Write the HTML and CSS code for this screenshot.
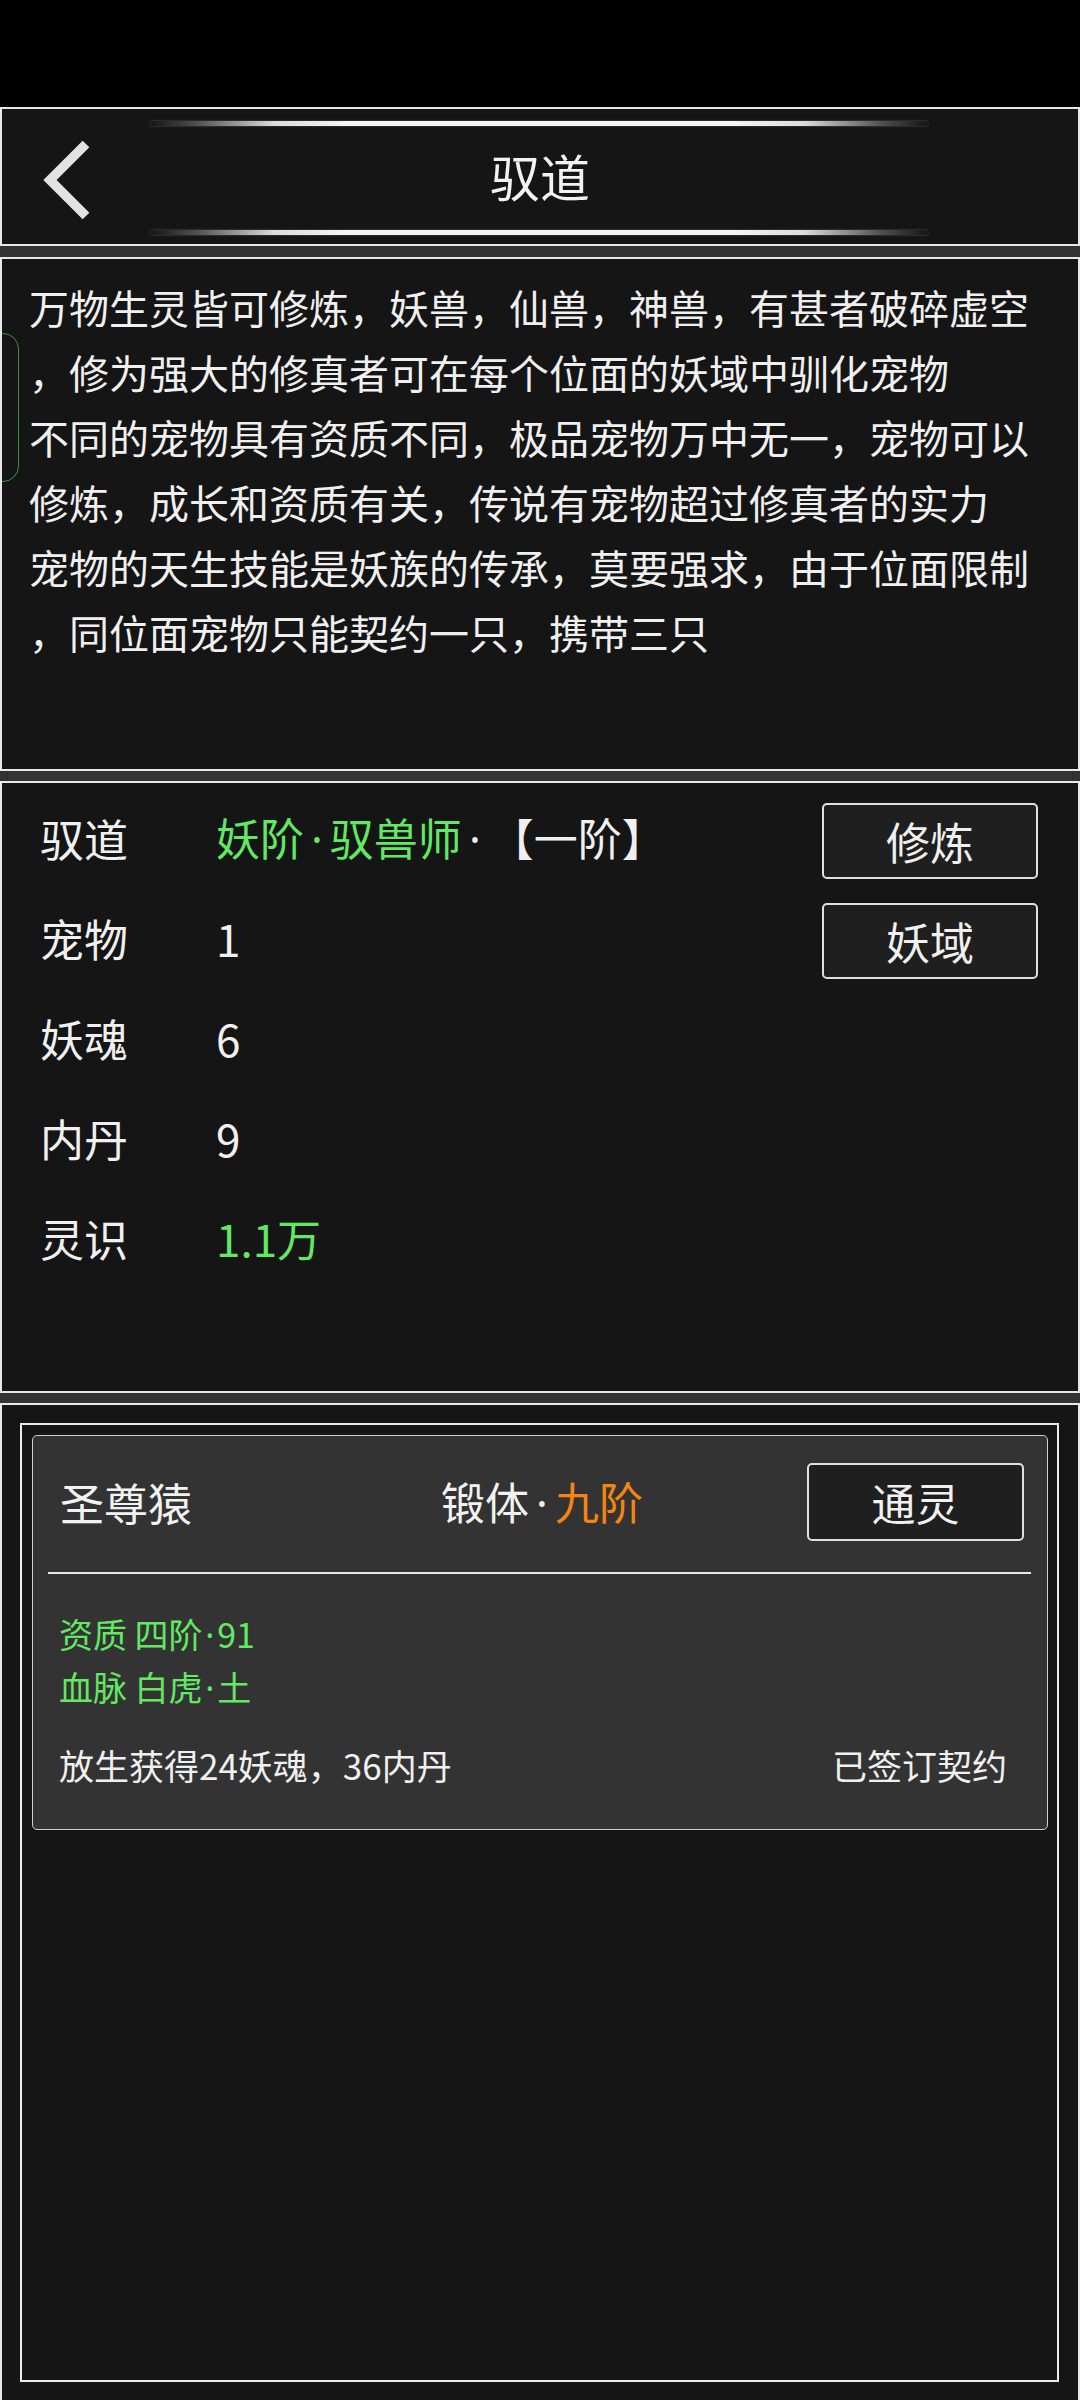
FILE: index.html
```html
<!DOCTYPE html>
<html lang="zh-CN">
<head>
<meta charset="utf-8">
<title>驭道</title>
<link rel="stylesheet" href="styles.css">
</head>
<body>
<div class="screen">
  <div class="statusbar"></div>

  <header class="panel header">
    <div class="glow"></div>
    <div class="title-row">
      <button class="back" aria-label="返回">
        <svg width="60" height="80" viewBox="0 0 60 80">
          <path d="M48 4 L12 40 L48 76" fill="none" stroke="#e2e2e2" stroke-width="9.5" stroke-linecap="butt" stroke-linejoin="miter"/>
        </svg>
      </button>
      <h1 class="title">驭道</h1>
      <span class="spacer"></span>
    </div>
    <div class="glow"></div>
  </header>

  <section class="panel intro">
    <div class="side-tab"></div>
    <p class="line">万物生灵皆可修炼，妖兽，仙兽，神兽，有甚者破碎虚空</p>
    <p class="line">，修为强大的修真者可在每个位面的妖域中驯化宠物</p>
    <p class="line">不同的宠物具有资质不同，极品宠物万中无一，宠物可以</p>
    <p class="line">修炼，成长和资质有关，传说有宠物超过修真者的实力</p>
    <p class="line">宠物的天生技能是妖族的传承，莫要强求，由于位面限制</p>
    <p class="line">，同位面宠物只能契约一只，携带三只</p>
  </section>

  <section class="panel stats">
    <div class="rows">
      <div class="row"><span class="label">驭道</span><span class="value"><span class="green">妖阶<span class="dot">·</span>驭兽师</span><span class="dot">·</span><span class="bracket">【一阶】</span></span></div>
      <div class="row"><span class="label">宠物</span><span class="value">1</span></div>
      <div class="row"><span class="label">妖魂</span><span class="value">6</span></div>
      <div class="row"><span class="label">内丹</span><span class="value">9</span></div>
      <div class="row"><span class="label">灵识</span><span class="value green">1.1万</span></div>
    </div>
    <div class="actions">
      <button class="btn">修炼</button>
      <button class="btn">妖域</button>
    </div>
  </section>

  <section class="panel pets">
    <div class="frame">
      <article class="card">
        <div class="card-head">
          <span class="pet-name">圣尊猿</span>
          <span class="pet-stage">锻体<span class="dot">·</span><span class="orange">九阶</span></span>
          <button class="btn btn-card">通灵</button>
        </div>
        <div class="divider"></div>
        <div class="card-body">
          <p class="attr green">资质 四阶<span class="dot dot-sm">·</span>91</p>
          <p class="attr green">血脉 白虎<span class="dot dot-sm">·</span>土</p>
          <div class="card-foot">
            <span>放生获得24妖魂，36内丹</span>
            <span>已签订契约</span>
          </div>
        </div>
      </article>
    </div>
  </section>
</div>
</body>
</html>
```
FILE: styles.css
```css
* { box-sizing: border-box; }

html, body {
  margin: 0;
  padding: 0;
  background: #333333;
  overflow: hidden;
}

body {
  width: 1080px;
  height: 2400px;
  font-family: "Noto Sans CJK SC", "Noto Sans", sans-serif;
  color: #f0f0f0;
  text-spacing-trim: space-all;
}

.screen {
  display: flex;
  flex-direction: column;
  gap: 10px;
}

.statusbar {
  height: 107px;
  background: #000;
  margin-bottom: -10px;
}

.panel {
  border: 2px solid #e8e8e8;
  background: #151515;
  position: relative;
}

/* header */
.header {
  height: 139px;
  margin-bottom: 1px;
  padding-top: 12px;
  display: flex;
  flex-direction: column;
}

.glow {
  width: 778px;
  height: 5px;
  margin: 0 auto 0 148px;
  border-radius: 3px;
  background: linear-gradient(90deg,
    rgba(255,255,255,0) 0%,
    rgba(255,255,255,0.25) 6%,
    rgba(255,255,255,0.85) 16%,
    #f4f4f4 25%,
    #f4f4f4 75%,
    rgba(255,255,255,0.85) 84%,
    rgba(255,255,255,0.25) 94%,
    rgba(255,255,255,0) 100%);
  box-shadow: 0 0 2px rgba(255,255,255,0.35);
}

.title-row {
  height: 104px;
  display: grid;
  grid-template-columns: 1fr auto 1fr;
  align-items: center;
}

.back {
  justify-self: start;
  margin-left: 36px;
  margin-top: 4px;
  width: 60px;
  height: 80px;
  padding: 0;
  border: 0;
  background: transparent;
  display: block;
}

.back svg { display: block; }

.title {
  margin: -6px 0 0 0;
  font-size: 50px;
  font-weight: 400;
  color: #f2f2f2;
  line-height: 1;
}

/* intro */
.intro {
  height: 514px;
  padding: 16px 0 0 27px;
  overflow: hidden;
}

.line {
  margin: 0;
  font-size: 40px;
  line-height: 65px;
  white-space: nowrap;
  color: #f0f0f0;
}

.side-tab {
  position: absolute;
  left: -20px;
  top: 74px;
  width: 37px;
  height: 149px;
  border: 1.5px solid #3a963a;
  border-radius: 16px;
}

/* stats */
.stats {
  height: 612px;
  display: flex;
  padding: 5px 40px 0 38px;
}

.rows {
  flex: 1;
  display: flex;
  flex-direction: column;
}

.row {
  height: 100px;
  display: flex;
  align-items: center;
  font-size: 44px;
  line-height: 1;
}

.label {
  width: 176px;
  color: #f0f0f0;
}

.value {
  color: #f0f0f0;
  white-space: nowrap;
}

.bracket {
  text-spacing-trim: space-all;
  font-feature-settings: "halt" 0;
  padding-left: 2px;
}

.dot {
  font-family: "Noto Sans", "DejaVu Sans", sans-serif;
  padding: 0 0.16em;
}

.dot-sm {
  padding: 0 0.08em;
}

.green { color: #62e862; }
.orange { color: #f38512; }

.actions {
  display: flex;
  flex-direction: column;
  gap: 24px;
  padding-top: 15px;
}

.btn {
  width: 216px;
  height: 76px;
  border: 2.5px solid #e0e0e0;
  border-radius: 5px;
  background: #1f1f1f;
  color: #f0f0f0;
  font-family: "Noto Sans CJK SC", "Noto Sans", sans-serif;
  font-size: 44px;
  line-height: 1;
  padding: 0;
  display: flex;
  align-items: center;
  justify-content: center;
}

/* pets */
.pets {
  height: 1000px;
  padding: 18px 19px 0 18px;
}

.frame {
  height: 959px;
  border: 2px solid #ececec;
  padding: 10px 9px 0 10px;
}

.card {
  background: #333333;
  border: 1.5px solid #cfcfcf;
  border-radius: 5px;
  height: 395px;
}

.card-head {
  display: grid;
  grid-template-columns: 1fr auto 1fr;
  align-items: center;
  padding: 27px 23px 31px 27px;
}

.pet-name {
  font-size: 44px;
  line-height: 1;
  color: #f2f2f2;
  justify-self: start;
}

.pet-stage {
  font-size: 44px;
  line-height: 1;
  color: #f2f2f2;
  white-space: nowrap;
}

.btn-card {
  justify-self: end;
  width: 217px;
  height: 78px;
}

.divider {
  height: 2px;
  background: #e8e8e8;
  margin: 0 16px 0 15px;
}

.card-body {
  padding: 34px 40px 0 26px;
}

.attr {
  margin: 0;
  font-size: 34px;
  line-height: 52px;
}

.card-foot {
  margin-top: 25px;
  display: flex;
  justify-content: space-between;
  font-size: 35px;
  line-height: 52px;
  color: #f0f0f0;
}
```
